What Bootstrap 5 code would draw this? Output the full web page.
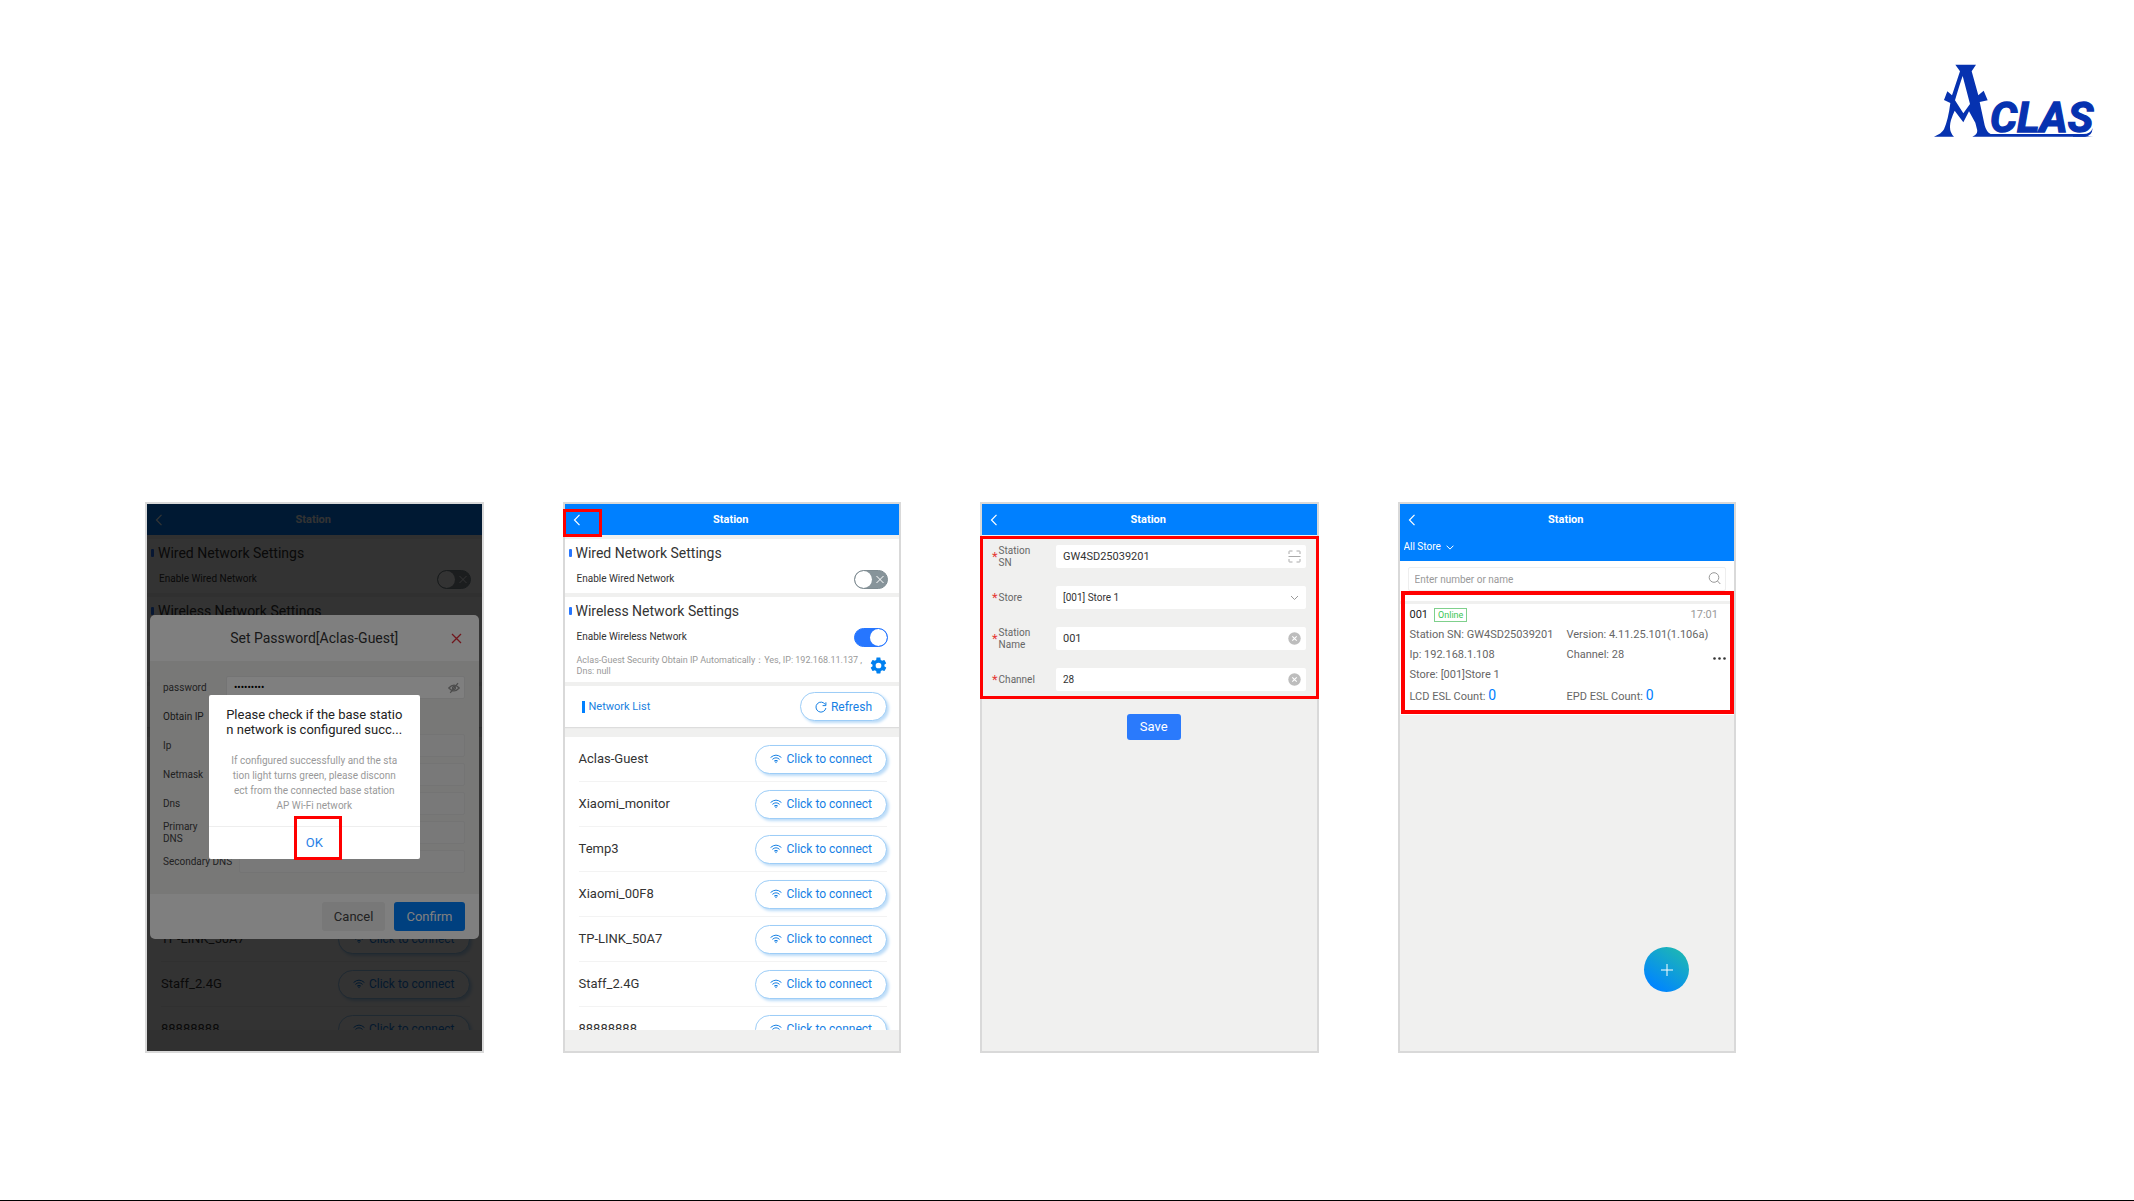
<!DOCTYPE html>
<html lang="en">
<head>
<meta charset="utf-8">
<meta name="viewport" content="width=device-width, initial-scale=1">
<title>Aclas station setup</title>
<link rel="stylesheet" href="https://cdn.jsdelivr.net/npm/bootstrap@5.3.0/dist/css/bootstrap.min.css">
<style>
body{font-family:Roboto,"Liberation Sans",sans-serif;font-size:10px;line-height:12px;color:#333;background:#fff;border-bottom:1px solid #000}
.site-head{padding:64px 38px 0 0}
.brand-art{width:162px;height:73px;overflow:visible}
.steps{padding:365px 398px 0 145px;gap:79px}
.phone{flex:1 1 0;min-width:0;aspect-ratio:339/552;border:2px solid #d9d9d9;background:#f0f0ef}
.app-bar{height:31px;background:#0080ff;color:#fff;padding:0 20px 0 6px}
.app-title{font-size:11px;line-height:12px;font-weight:700;margin:0}
.back-btn{border:0;background:none;padding:0;color:#fff;width:12px;line-height:0}
.back-btn svg{width:8px;height:12px}
.sect{background:#fff;margin-top:4px;padding:5px 11px 1px 4px}
.sect h2{font-size:14px;line-height:18px;margin:0;font-weight:400;gap:4px}
.sect h2::before{content:"";width:3px;height:8px;background:#2676ff;border-radius:1px}
.set-row{padding-left:8px;height:26px;margin-top:4px}
.set-row label{font-size:10px}
.toggle{appearance:none;width:34px;height:19px;border-radius:10px;margin:0;border:1px solid #7f8c92;background:#87949a url("data:image/svg+xml,%3Csvg xmlns='http://www.w3.org/2000/svg' viewBox='0 0 32 17'%3E%3Ccircle cx='8.5' cy='8.5' r='8.5' fill='%23fff'/%3E%3Cpath d='M21.500 5l7 7m0-7l-7 7' stroke='%23fff'/%3E%3C/svg%3E") center/100% 100%}
.toggle:checked{border-color:#2676ff;background:#2676ff url("data:image/svg+xml,%3Csvg xmlns='http://www.w3.org/2000/svg' viewBox='0 0 32 17'%3E%3Ccircle cx='23.500' cy='8.500' r='8.500' fill='%23fff'/%3E%3C/svg%3E") center/100% 100%}
.ip-info{padding-left:8px;color:#999;font-size:9px;line-height:11px;height:27px;margin:2px 0}
.gear{border:0;background:none;padding:0;line-height:0;color:#0080f0}
.gear svg{width:19px;height:19px}
.net-bar{background:#fff;height:41px;margin-top:4px;padding:0 12px 0 17px;color:#1a7fe0;box-shadow:0 1px 1px #ddd}
.net-bar h3{font-size:11px;line-height:14px;margin:0;gap:4px;font-weight:400}
.net-bar h3::before{content:"";width:3px;height:12px;background:#0080ff}
.pill{border:1px solid #9dcdf7;border-radius:15px;height:29px;background:#fff;color:#1680e4;font-size:12px;line-height:16px;padding:0 14px;gap:4px;box-shadow:2px 2px 3px #bcdcf8}
.pill svg{width:12px;height:12px}
.net-list{background:#fff;margin:10px 0 21px;padding:0 12px 0 14px;flex:1 1 0;min-height:0;overflow:hidden}
.net-list li{height:45px;border-bottom:1px solid #f3f3f3;font-size:13px;line-height:16px}
.veil{position:absolute;inset:0;background:rgba(0,0,0,.6)}
.veil.top-veil{background:rgba(0,0,0,.5)}
.pw-modal{position:absolute;left:3px;right:3px;top:111px;background:#fff;border-radius:5px;overflow:hidden}
.pw-head{height:46px;padding:0 17px 0 28px}
.pw-head h2{font-size:14px;line-height:18px;margin:0;font-weight:400}
.pw-head button{border:0;background:none;padding:0;line-height:0;width:11px}
.pw-body{background:#f0f0ef;padding:12px 14px 18px 13px}
.pw-row{height:29px;font-size:10px;gap:7px}
.pw-row label{min-width:56px;color:#444}
.pw-row input{min-width:0;height:23px;border:1px solid #e8e8e8;background:#f3f3f2;border-radius:2px;font-size:10px;padding:0 7px}
.pw-row input[type=password]{background:#fff}
.eye{position:absolute;right:5px;top:6px;width:12px;height:12px}
.pw-foot{padding:8px 14px;gap:9px}
.pw-foot .btn,.save-btn{font-size:13px;line-height:16px;height:29px;padding:0 13px;border-radius:3px;border:0}
.pw-foot .btn{padding:0 12px}
.pw-foot .btn-cancel{background:#f0f0f0;color:#444}
.pw-foot .btn-confirm{background:#0080ff;color:#fff}
.ask{position:absolute;left:62px;right:62px;top:191px;background:#fff;border-radius:2px}
.ask h2{font-size:13px;line-height:15px;margin:0;padding:12px 0 16px;font-weight:400;color:#222}
.ask p{font-size:10px;line-height:15px;margin:0;padding-bottom:13px;color:#999}
.ask button{border:0;border-top:1px solid #eee;background:none;color:#2a7fe6;height:33px;font-size:13px}
.hl{position:absolute;border:3px solid #f00;pointer-events:none}
.hl-ok{left:147px;top:312px;width:48px;height:44px}
.hl-back{left:-2px;top:5px;width:39px;height:28px}
.hl-form{left:-2px;right:-2px;top:32px;height:163px}
.hl-card{left:1px;right:0;top:87px;height:123px;border-width:4px}
.st-form{padding:10px 11px 0 10px}
.st-row{height:23px;margin-bottom:18px}
.st-row label{width:64px;color:#666;font-size:10px;line-height:12px;gap:1px}
.req{color:#e53935;font-size:13px}
.field{height:23px;border:0;border-radius:2px;background:#fff;font-size:10px;line-height:14px;padding:0 7px;color:#333;min-width:0}
.field-key{font-size:11px}
select.field{appearance:none}
.f-icon{position:absolute;right:5px;top:5px;width:13px;height:13px;pointer-events:none}
.save-line{padding-left:10px}
.save-btn{background:#2a7afc;color:#fff;height:26px;margin-top:5px}
.store-bar{background:#0080ff;height:26px;padding:0 0 2px 4px}
.store-bar select{appearance:none;border:0;background:none;color:#fff;font-size:10px;line-height:12px;padding:0}
.store-bar svg{width:8px;height:5px}
.find{background:#fff;padding:6px 8px 10px}
.find input{height:24px;border:1px solid #eee;border-radius:2px;font-size:10px;padding:0 6px}
.find input::placeholder{color:#999}
.st-card{background:#fff;margin-top:3px;padding:1px 16px 8px 10px;color:#666;font-size:11px;line-height:20px}
.st-card .cell-l{width:157px}
.st-card .cnt{color:#0080ff;font-size:14px}
.st-card .num{color:#222}
.st-card .when{color:#999}
.tag{border:1px solid #7fd08c;color:#3ac653;font-size:9px;line-height:12px;padding:0 3px;margin-left:6px}
.dots{position:absolute;right:8px;top:53px;width:13px;height:3px;border:0;padding:0;background:none;line-height:0}
.fab{position:absolute;right:45px;bottom:59px;width:45px;height:45px;border:0;border-radius:50%;background:linear-gradient(35deg,#0085ff 15%,#1cb4b8 85%);line-height:0}
</style>
</head>
<body class="min-vh-100 d-flex flex-column">
<svg class="d-none">
<symbol id="i-back" viewBox="0 0 8 12"><path d="M6.500 .8L1.500 6l5 5.200" fill="none" stroke="currentColor" stroke-width="1.200"/></symbol>
<symbol id="i-wifi" viewBox="0 0 12 12"><g fill="none" stroke="currentColor" stroke-width="1"><path d="M.6 4.500Q6-.2 11.400 4.500M2.400 6.400Q6 3.200 9.600 6.400M4.100 8.100Q6 6.500 7.900 8.100"/></g><path d="M4.900 8.800Q6 8 7.100 8.800L6 10.200z" fill="currentColor"/></symbol>
<symbol id="i-clear" viewBox="0 0 13 13"><circle cx="6.500" cy="6.500" r="6.200" fill="#bdbdbd"/><path d="M4.300 4.300l4.400 4.400m0-4.400L4.300 8.700" stroke="#fff" stroke-width="1.100"/></symbol>
<symbol id="i-reload" viewBox="0 0 12 12"><path d="M10.300 3.600A5 5 0 1 0 10.900 7" fill="none" stroke="currentColor"/><path d="M10.900 1.300v3.300H7.600" fill="none" stroke="currentColor"/></symbol>
<symbol id="i-down" viewBox="0 0 8 5"><path d="M.6 .7L4 4.100 7.400 .7" fill="none" stroke="currentColor"/></symbol>
<symbol id="i-gear" viewBox="0 0 24 24"><path fill="currentColor" d="M19.400 13c0-.3.100-.6.100-1s0-.7-.1-1l2.100-1.600c.2-.2.200-.4.100-.6l-2-3.500c-.1-.2-.4-.3-.6-.2l-2.500 1c-.5-.4-1.100-.7-1.700-1l-.4-2.600c0-.3-.2-.5-.5-.5h-4c-.3 0-.5.200-.5.500L9.100 5.100c-.6.300-1.200.6-1.700 1l-2.500-1c-.2-.1-.5 0-.6.200l-2 3.500c-.1.200-.1.500.1.600L4.500 11c0 .3-.1.700-.1 1s0 .7.100 1l-2.100 1.600c-.2.200-.2.400-.1.600l2 3.500c.1.200.4.300.6.200l2.500-1c.5.400 1.100.7 1.700 1l.4 2.600c0 .3.200.5.500.5h4c.3 0 .5-.2.500-.5l.4-2.600c.6-.3 1.200-.6 1.700-1l2.500 1c.2.100.5 0 .6-.2l2-3.500c.1-.2.100-.5-.1-.6L19.400 13zM12 15.600a3.600 3.600 0 1 1 0-7.200 3.600 3.600 0 0 1 0 7.200z"/></symbol>
</svg>

<header class="site-head d-flex justify-content-end">
<svg class="brand-art" viewBox="102 70 486 219" role="img" aria-label="Aclas" fill="#0632b0">
<path fill-rule="evenodd" d="M166 72H228L215 92 235 164 251 150 263 179 239 184 254 254Q259 274 272 280H520L519 286H580Q570 287 555 288H217Q235 280 231 266L226 246 207 212 190 245 164 210Q150 240 150 256 149 276 162 288H102Q124 280 132 266 145 236 151 187L132 178 142 152 156 164 180 92zM188 106Q180 128 165 179L190 218 210 190z"/>
<path d="M519 280H550Q572 280 578 262 576 288 554 288H519z"/>
<text x="270" y="273" font-family="Liberation Sans Narrow, Roboto, sans-serif" font-weight="700" font-style="italic" font-size="128" stroke="#0632b0" stroke-width="4">CLAS</text>
</svg>
</header>

<main class="steps d-flex align-items-start flex-grow-1">

<section class="phone position-relative d-flex flex-column">
<div class="app-bar d-flex align-items-center"><button class="back-btn" aria-label="Back"><svg><use href="#i-back"/></svg></button><h1 class="app-title flex-grow-1 text-center">Station</h1></div>
<div class="sect"><h2 class="d-flex align-items-center">Wired Network Settings</h2>
<div class="set-row d-flex justify-content-between align-items-center"><label for="w1">Enable Wired Network</label><input class="toggle" type="checkbox" id="w1"></div></div>
<div class="sect"><h2 class="d-flex align-items-center">Wireless Network Settings</h2>
<div class="set-row"></div>
<div class="ip-info"></div></div>
<div class="net-bar"></div>
<ul class="net-list list-unstyled">
<li></li><li></li><li></li><li></li>
<li class="d-flex justify-content-between align-items-center">TP-LINK_50A7<button class="pill d-flex align-items-center"><svg><use href="#i-wifi"/></svg>Click to connect</button></li>
<li class="d-flex justify-content-between align-items-center">Staff_2.4G<button class="pill d-flex align-items-center"><svg><use href="#i-wifi"/></svg>Click to connect</button></li>
<li class="d-flex justify-content-between align-items-center">88888888<button class="pill d-flex align-items-center"><svg><use href="#i-wifi"/></svg>Click to connect</button></li>
</ul>
<div class="veil"></div>
<div class="pw-modal">
<div class="pw-head d-flex align-items-center"><h2 class="flex-grow-1 text-center">Set Password[Aclas-Guest]</h2><button aria-label="Close"><svg width="11" height="11" viewBox="0 0 11 11"><path d="M1 1l9 9m0-9l-9 9" stroke="#e22c38" stroke-width="1.300"/></svg></button></div>
<div class="pw-body">
<div class="pw-row d-flex align-items-center"><label for="pw">password</label><div class="position-relative flex-grow-1 d-flex"><input class="w-100" type="password" id="pw" value="aclas1234"><svg class="eye" viewBox="0 0 12 12" fill="none" stroke="#999" stroke-width="1.300"><path d="M.8 6Q6 .2 11.200 6 6 11.800 .8 6zM10 1.200L2.200 10.800"/><circle cx="6" cy="6" r="1.500"/></svg></div></div>
<div class="pw-row d-flex align-items-center"><span>Obtain IP</span></div>
<div class="pw-row d-flex align-items-center"><label for="ip">Ip</label><input class="flex-grow-1" id="ip"></div>
<div class="pw-row d-flex align-items-center"><label for="nm">Netmask</label><input class="flex-grow-1" id="nm"></div>
<div class="pw-row d-flex align-items-center"><label for="dns">Dns</label><input class="flex-grow-1" id="dns"></div>
<div class="pw-row d-flex align-items-center"><label for="pdns">Primary<br>DNS</label><input class="flex-grow-1" id="pdns"></div>
<div class="pw-row d-flex align-items-center"><label for="sdns">Secondary DNS</label><input class="flex-grow-1" id="sdns"></div>
</div>
<div class="pw-foot d-flex justify-content-end"><button class="btn btn-cancel">Cancel</button><button class="btn btn-confirm">Confirm</button></div>
</div>
<div class="veil top-veil"></div>
<div class="ask text-center">
<h2>Please check if the base statio<br>n network is configured succ...</h2>
<p>If configured successfully and the sta<br>tion light turns green, please disconn<br>ect from the connected base station<br>AP Wi-Fi network</p>
<button class="w-100">OK</button>
</div>
<div class="hl hl-ok"></div>
</section>

<section class="phone position-relative d-flex flex-column">
<div class="app-bar d-flex align-items-center"><button class="back-btn" aria-label="Back"><svg><use href="#i-back"/></svg></button><h1 class="app-title flex-grow-1 text-center">Station</h1></div>
<div class="sect"><h2 class="d-flex align-items-center">Wired Network Settings</h2>
<div class="set-row d-flex justify-content-between align-items-center"><label for="w2">Enable Wired Network</label><input class="toggle" type="checkbox" id="w2"></div></div>
<div class="sect"><h2 class="d-flex align-items-center">Wireless Network Settings</h2>
<div class="set-row d-flex justify-content-between align-items-center"><label for="wl2">Enable Wireless Network</label><input class="toggle" type="checkbox" id="wl2" checked></div>
<div class="ip-info d-flex justify-content-between align-items-center"><span class="text-nowrap">Aclas-Guest Security Obtain IP Automatically：Yes, IP: 192.168.11.137 ,<br>Dns: null</span><button class="gear" aria-label="Network details"><svg><use href="#i-gear"/></svg></button></div></div>
<div class="net-bar d-flex justify-content-between align-items-center"><h3 class="d-flex align-items-center">Network List</h3><button class="pill d-flex align-items-center"><svg><use href="#i-reload"/></svg>Refresh</button></div>
<ul class="net-list list-unstyled">
<li class="d-flex justify-content-between align-items-center">Aclas-Guest<button class="pill d-flex align-items-center"><svg><use href="#i-wifi"/></svg>Click to connect</button></li>
<li class="d-flex justify-content-between align-items-center">Xiaomi_monitor<button class="pill d-flex align-items-center"><svg><use href="#i-wifi"/></svg>Click to connect</button></li>
<li class="d-flex justify-content-between align-items-center">Temp3<button class="pill d-flex align-items-center"><svg><use href="#i-wifi"/></svg>Click to connect</button></li>
<li class="d-flex justify-content-between align-items-center">Xiaomi_00F8<button class="pill d-flex align-items-center"><svg><use href="#i-wifi"/></svg>Click to connect</button></li>
<li class="d-flex justify-content-between align-items-center">TP-LINK_50A7<button class="pill d-flex align-items-center"><svg><use href="#i-wifi"/></svg>Click to connect</button></li>
<li class="d-flex justify-content-between align-items-center">Staff_2.4G<button class="pill d-flex align-items-center"><svg><use href="#i-wifi"/></svg>Click to connect</button></li>
<li class="d-flex justify-content-between align-items-center">88888888<button class="pill d-flex align-items-center"><svg><use href="#i-wifi"/></svg>Click to connect</button></li>
</ul>
<div class="hl hl-back"></div>
</section>

<section class="phone position-relative d-flex flex-column">
<div class="app-bar d-flex align-items-center"><button class="back-btn" aria-label="Back"><svg><use href="#i-back"/></svg></button><h1 class="app-title flex-grow-1 text-center">Station</h1></div>
<form class="st-form">
<div class="st-row d-flex align-items-center"><label class="d-flex align-items-center flex-shrink-0" for="sn"><span class="req">*</span><span>Station<br>SN</span></label><div class="position-relative flex-grow-1 d-flex"><input class="field field-key w-100" id="sn" value="GW4SD25039201"><svg class="f-icon" viewBox="0 0 13 13" fill="none" stroke="#aaa"><path d="M1 4V1.500Q1 1 1.500 1H4.500M8.500 1H11.500Q12 1 12 1.500V4M12 9V11.500Q12 12 11.500 12H8.500M4.500 12H1.500Q1 12 1 11.500V9M.5 6.500H12.500"/></svg></div></div>
<div class="st-row d-flex align-items-center"><label class="d-flex align-items-center flex-shrink-0" for="store"><span class="req">*</span><span>Store</span></label><div class="position-relative flex-grow-1 d-flex"><select class="field w-100" id="store"><option>[001] Store 1</option></select><svg class="f-icon" viewBox="0 0 13 13" fill="none" stroke="#999"><path d="M3 5l3.500 3.500L10 5"/></svg></div></div>
<div class="st-row d-flex align-items-center"><label class="d-flex align-items-center flex-shrink-0" for="sname"><span class="req">*</span><span>Station<br>Name</span></label><div class="position-relative flex-grow-1 d-flex"><input class="field field-key w-100" id="sname" value="001"><svg class="f-icon"><use href="#i-clear"/></svg></div></div>
<div class="st-row d-flex align-items-center"><label class="d-flex align-items-center flex-shrink-0" for="chan"><span class="req">*</span><span>Channel</span></label><div class="position-relative flex-grow-1 d-flex"><input class="field w-100" id="chan" value="28"><svg class="f-icon"><use href="#i-clear"/></svg></div></div>
<div class="save-line text-center"><button type="button" class="save-btn">Save</button></div>
</form>
<div class="hl hl-form"></div>
</section>

<section class="phone position-relative d-flex flex-column">
<div class="app-bar d-flex align-items-center"><button class="back-btn" aria-label="Back"><svg><use href="#i-back"/></svg></button><h1 class="app-title flex-grow-1 text-center">Station</h1></div>
<div class="store-bar d-flex align-items-center gap-1 text-white"><select aria-label="Store"><option>All Store</option></select><svg><use href="#i-down"/></svg></div>
<div class="find"><div class="position-relative d-flex"><input class="w-100" type="text" aria-label="Search" placeholder="Enter number or name"><svg class="f-icon" viewBox="0 0 13 13" fill="none" stroke="#999"><circle cx="6" cy="5.500" r="4.800"/><path d="M9.500 9l2.800 3"/></svg></div></div>
<div class="st-card position-relative">
<div class="d-flex align-items-center"><span class="num">001</span><span class="tag">Online</span><span class="when ms-auto">17:01</span></div>
<div class="d-flex"><span class="cell-l">Station SN: GW4SD25039201</span><span>Version: 4.11.25.101(1.106a)</span></div>
<div class="d-flex"><span class="cell-l">Ip: 192.168.1.108</span><span>Channel: 28</span></div>
<div>Store: [001]Store 1</div>
<div class="d-flex"><span class="cell-l">LCD ESL Count: <span class="cnt">0</span></span><span>EPD ESL Count: <span class="cnt">0</span></span></div>
<button class="dots" aria-label="More"><svg width="13" height="3" fill="#333"><circle cx="1.500" cy="1.500" r="1.300"/><circle cx="6.500" cy="1.500" r="1.300"/><circle cx="11.500" cy="1.500" r="1.300"/></svg></button>
</div>
<div class="hl hl-card"></div>
<button class="fab" aria-label="Add station"><svg width="12" height="12"><path d="M6 0v12M0 6h12" stroke="#fff"/></svg></button>
</section>
</main>
<script src="https://cdn.jsdelivr.net/npm/bootstrap@5.3.0/dist/js/bootstrap.bundle.min.js"></script>
</body>
</html>
